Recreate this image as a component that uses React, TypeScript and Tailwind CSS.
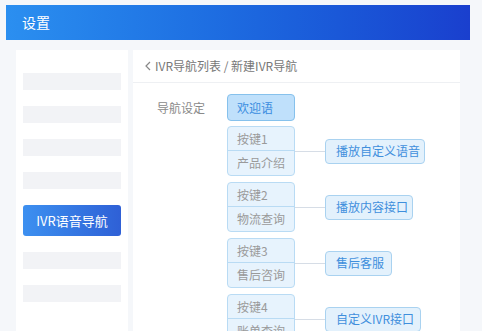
import React from "react";

const keys = [
  { key: "按键1", name: "产品介绍", action: "播放自定义语音", w: "w-[100px]" },
  { key: "按键2", name: "物流查询", action: "播放内容接口", w: "w-[88px]" },
  { key: "按键3", name: "售后咨询", action: "售后客服", w: "w-[67px]" },
  { key: "按键4", name: "账单查询", action: "自定义IVR接口", w: "w-[96px]" },
];

function KeyRow({ k }: { k: (typeof keys)[number] }) {
  return (
    <div className="flex items-center">
      <div className="w-[68px] h-[50px] rounded-[4px] border border-[#b9dbf4] bg-[#e7f3fd] text-[12px] text-[#9a9a9a] flex flex-col">
        <div className="h-[24px] flex items-center pl-[9px] border-b border-[#b9dbf4]">{k.key}</div>
        <div className="flex-1 flex items-center pl-[9px]">{k.name}</div>
      </div>
      <div className="w-[30px] h-px bg-[#d6dde6]" />
      <div
        className={`${k.w} h-[25px] rounded-[4px] border border-[#a9d2f0] bg-[#e3f1fc] text-[12px] text-[#3f8fdc] flex items-center pl-[10px]`}
      >
        {k.action}
      </div>
    </div>
  );
}

export default function App() {
  return (
    <div
      className="w-[482px] h-[331px] overflow-hidden bg-[#f5f7fa] pt-[5px]"
      style={{ fontFamily: '"Noto Sans CJK SC", "Noto Sans", sans-serif' }}
    >
      {/* header */}
      <div className="mx-[6px] w-[464px] h-[35px] bg-gradient-to-r from-[#2b8ff0] to-[#1a3fce] flex items-center pl-[16px] text-white text-[14px]">
        设置
      </div>

      <div className="flex mt-[10px] ml-[16px] gap-[5px]">
        {/* sidebar */}
        <div className="w-[112px] h-[290px] bg-white pt-[23px] px-[7px] flex flex-col gap-[16px]">
          <div className="h-[17px] bg-[#f2f3f6]" />
          <div className="h-[17px] bg-[#f2f3f6]" />
          <div className="h-[17px] bg-[#f2f3f6]" />
          <div className="h-[17px] bg-[#f2f3f6]" />
          <div className="h-[31px] rounded-[3px] bg-gradient-to-r from-[#3d90f0] to-[#2f60d6] text-white text-[13px] flex items-center justify-center">
            IVR语音导航
          </div>
          <div className="h-[17px] bg-[#f2f3f6]" />
          <div className="h-[17px] bg-[#f2f3f6]" />
        </div>

        {/* main */}
        <div className="w-[327px] h-[290px] bg-white">
          <div className="h-[33px] border-b border-[#eef0f3] flex items-center pl-[12px] text-[12px] text-[#777]">
            <svg width="6" height="10" viewBox="0 0 6 10" className="mr-[4px]">
              <path d="M5 1 L1 5 L5 9" fill="none" stroke="#888" strokeWidth="1.2" />
            </svg>
            <span>IVR导航列表 / 新建IVR导航</span>
          </div>
          <div className="flex pl-[24px] pt-[11px]">
            <div className="w-[70px] h-[27px] flex items-center text-[12px] text-[#8a8a8a]">导航设定</div>
            <div className="flex flex-col gap-[5px]">
              <div className="w-[68px] h-[27px] rounded-[4px] border border-[#86c1ec] bg-[#bfe0fb] text-[12px] text-[#3a8de0] flex items-center pl-[9px]">
                欢迎语
              </div>
              <div className="flex flex-col gap-[6px]">
                {keys.map((k) => (
                  <KeyRow key={k.key} k={k} />
                ))}
              </div>
            </div>
          </div>
        </div>
      </div>
    </div>
  );
}
